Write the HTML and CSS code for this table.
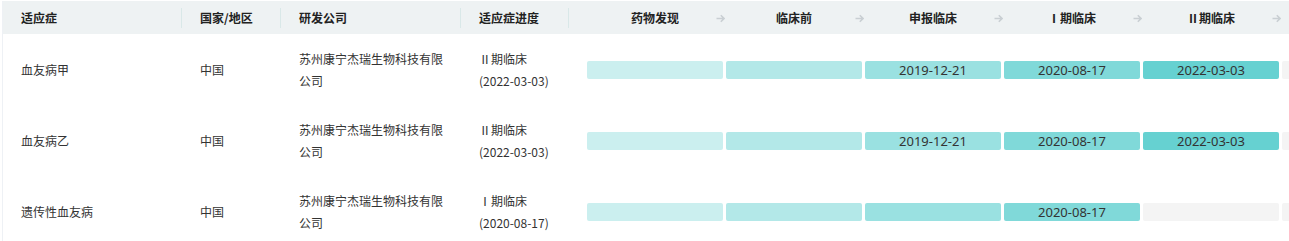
FILE: index.html
```html
<!DOCTYPE html>
<html lang="zh">
<head>
<meta charset="utf-8">
<link rel="stylesheet" href="styles.css">
</head>
<body>
<div class="table">
  <div class="row head">
    <div class="cell c1 hd">适应症</div>
    <div class="cell c2 hd">国家/地区</div>
    <div class="cell c3 hd">研发公司</div>
    <div class="cell c4 hd">适应症进度</div>
    <div class="stages">
      <div class="stage-h">药物发现<svg class="arr" viewBox="0 0 9 9"><path d="M0.5 4.5H8M4.8 1.3L8 4.5L4.8 7.7"/></svg></div>
      <div class="stage-h">临床前<svg class="arr" viewBox="0 0 9 9"><path d="M0.5 4.5H8M4.8 1.3L8 4.5L4.8 7.7"/></svg></div>
      <div class="stage-h">申报临床<svg class="arr" viewBox="0 0 9 9"><path d="M0.5 4.5H8M4.8 1.3L8 4.5L4.8 7.7"/></svg></div>
      <div class="stage-h">Ⅰ期临床<svg class="arr" viewBox="0 0 9 9"><path d="M0.5 4.5H8M4.8 1.3L8 4.5L4.8 7.7"/></svg></div>
      <div class="stage-h">Ⅱ期临床<svg class="arr" viewBox="0 0 9 9"><path d="M0.5 4.5H8M4.8 1.3L8 4.5L4.8 7.7"/></svg></div>
      <div class="stage-h"></div>
    </div>
  </div>

  <div class="row">
    <div class="cell c1">血友病甲</div>
    <div class="cell c2">中国</div>
    <div class="cell c3 wrap">苏州康宁杰瑞生物科技有限公司</div>
    <div class="cell c4 wrap">Ⅱ期临床<br>(2022-03-03)</div>
    <div class="stages">
      <div class="bar s1"></div>
      <div class="bar s2"></div>
      <div class="bar s3">2019-12-21</div>
      <div class="bar s4">2020-08-17</div>
      <div class="bar s5">2022-03-03</div>
      <div class="bar empty"></div>
    </div>
  </div>

  <div class="row">
    <div class="cell c1">血友病乙</div>
    <div class="cell c2">中国</div>
    <div class="cell c3 wrap">苏州康宁杰瑞生物科技有限公司</div>
    <div class="cell c4 wrap">Ⅱ期临床<br>(2022-03-03)</div>
    <div class="stages">
      <div class="bar s1"></div>
      <div class="bar s2"></div>
      <div class="bar s3">2019-12-21</div>
      <div class="bar s4">2020-08-17</div>
      <div class="bar s5">2022-03-03</div>
      <div class="bar empty"></div>
    </div>
  </div>

  <div class="row">
    <div class="cell c1">遗传性血友病</div>
    <div class="cell c2">中国</div>
    <div class="cell c3 wrap">苏州康宁杰瑞生物科技有限公司</div>
    <div class="cell c4 wrap">Ⅰ期临床<br>(2020-08-17)</div>
    <div class="stages">
      <div class="bar s1"></div>
      <div class="bar s2"></div>
      <div class="bar s3"></div>
      <div class="bar s4">2020-08-17</div>
      <div class="bar empty"></div>
      <div class="bar empty"></div>
    </div>
  </div>
</div>
</body>
</html>
```

FILE: styles.css
```css
html, body {
  margin: 0;
  padding: 0;
  background: #fff;
  overflow: hidden;
}
body {
  font-family: "Noto Sans CJK SC", "Noto Sans", sans-serif;
  font-size: 12px;
  color: #333;
}
.table {
  margin: 1px 0 0 2px;
  border-left: 1px solid #eef1f5;
  width: 1420px;
}
.row {
  display: flex;
  height: 71px;
  align-items: center;
}
.row.head {
  height: 33px;
  background: #eef2f3;
}
.cell {
  box-sizing: border-box;
  padding-left: 18px;
  flex: none;
  position: relative;
}
.c1 { width: 179px; }
.c2 { width: 99px; }
.c3 { width: 180px; padding-right: 16px; }
.c4 { width: 108px; }
.wrap { line-height: 22px; }
.hd {
  font-weight: bold;
  color: #222;
  height: 33px;
  line-height: 33px;
}
.hd::after {
  content: "";
  position: absolute;
  right: 0;
  top: 7px;
  height: 20px;
  width: 1px;
  background: #d9e8e8;
}
.stages {
  display: grid;
  grid-template-columns: repeat(6, 136px);
  column-gap: 3px;
  padding-left: 18px;
  flex: none;
}
.stage-h {
  position: relative;
  text-align: center;
  font-weight: bold;
  color: #222;
  line-height: 33px;
  height: 33px;
}
.arr {
  position: absolute;
  right: -2px;
  top: 13px;
  width: 9px;
  height: 9px;
  fill: none;
  stroke: #c9cfd3;
  stroke-width: 1.6;
}
.bar {
  height: 18px;
  border-radius: 2px;
  text-align: center;
  line-height: 18px;
  font-family: "Noto Sans", "Noto Sans CJK SC", sans-serif;
  font-size: 13px;
  color: #333;
}
.s1 { background: #cbefef; }
.s2 { background: #b3e8e8; }
.s3 { background: #9ae1e1; }
.s4 { background: #80d9d9; }
.s5 { background: #66d1d1; }
.empty { background: #f4f4f4; }
```
